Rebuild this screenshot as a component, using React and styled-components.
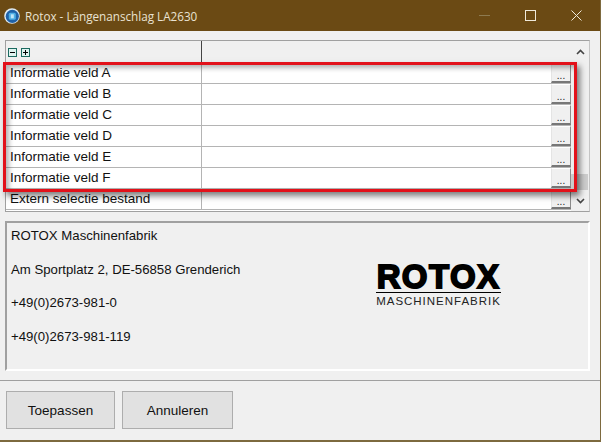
import React from "react";
import styled, { createGlobalStyle } from "styled-components";

const GlobalStyle = createGlobalStyle`
  html, body {
    margin: 0;
    padding: 0;
    background: #f0f0f0;
  }
`;

const Window = styled.div`
  position: relative;
  width: 601px;
  height: 442px;
  box-sizing: border-box;
  display: flex;
  flex-direction: column;
  background: #f0f0f0;
  border-right: 1px solid #7d6a3f;
  border-bottom: 2px solid #7d6a3f;
  font-family: "Liberation Sans", Arial, sans-serif;
  overflow: hidden;
`;

const TitleBar = styled.div`
  height: 31px;
  flex: none;
  display: flex;
  align-items: center;
  background: #6b4a14;
  color: #e9e2d2;
  font-family: "Open Sans", sans-serif;
  font-size: 11.7px;
  padding: 0 1px 0 4px;
`;

const TitleText = styled.span`
  margin-left: 5px;
  flex: 1;
`;

const WinButton = styled.div`
  width: 46px;
  height: 31px;
  display: flex;
  align-items: center;
  justify-content: center;
`;

const Content = styled.div`
  flex: 1;
  display: flex;
  flex-direction: column;
  padding: 9px 10px 0 5px;
`;

const Grid = styled.div`
  height: 172px;
  box-sizing: border-box;
  flex: none;
  display: flex;
  border: 1px solid #a0a0a0;
  border-right-color: #c4c4c4;
  background: #fff;
`;

const GridBody = styled.div`
  flex: 1;
  display: flex;
  flex-direction: column;
`;

const HeaderRow = styled.div`
  height: 22px;
  flex: none;
  display: flex;
  background: #f0f0f0;
`;

const HeaderLabel = styled.div`
  width: 196px;
  box-sizing: border-box;
  border-right: 1px solid #444;
  display: flex;
  align-items: center;
  gap: 4px;
  padding: 0 0 0 2px;
`;

const Toggle = styled.span`
  width: 9px;
  height: 9px;
  box-sizing: border-box;
  border: 1px solid #1c6a60;
  background: #dff3f0;
  display: flex;
  align-items: center;
  justify-content: center;
`;

const Row = styled.div`
  height: 21px;
  flex: none;
  box-sizing: border-box;
  display: flex;
  background: #fff;
  border-bottom: 1px solid #b4b4b4;
`;

const RowLabel = styled.div`
  width: 196px;
  box-sizing: border-box;
  border-right: 1px solid #b4b4b4;
  padding-left: 4px;
  font-size: 13.5px;
  line-height: 19px;
  color: #111;
  white-space: nowrap;
`;

const RowValue = styled.div`
  flex: 1;
  display: flex;
  justify-content: flex-end;
`;

const DotsButton = styled.div`
  width: 20px;
  height: 20px;
  box-sizing: border-box;
  background: #f0f0f0;
  border-left: 1px solid #e4e4e4;
  border-top: 1px solid #fff;
  border-right: 1px solid #8c8c8c;
  border-bottom: 2px solid #777;
  display: flex;
  align-items: flex-end;
  justify-content: center;
  font-size: 10px;
  line-height: 11px;
  color: #222;
`;

const Scrollbar = styled.div`
  width: 18px;
  flex: none;
  display: flex;
  flex-direction: column;
  background: #f0f0f0;
`;

const ScrollArrow = styled.div`
  height: 21px;
  flex: none;
  display: flex;
  align-items: center;
  justify-content: center;
`;

const ScrollTrack = styled.div`
  flex: 1;
  display: flex;
  flex-direction: column;
  justify-content: flex-end;
`;

const ScrollThumb = styled.div`
  height: 16px;
  margin-right: 1px;
  background: #cdcdcd;
`;

const InfoPanel = styled.div`
  margin-top: 9px;
  height: 150px;
  flex: none;
  box-sizing: border-box;
  display: flex;
  border-top: 2px solid #a0a0a0;
  border-left: 2px solid #a0a0a0;
  border-right: 2px solid #fff;
  border-bottom: 2px solid #fff;
`;

const Address = styled.div`
  flex: 1;
  padding: 4px 0 0 4px;
  display: flex;
  flex-direction: column;
  gap: 16.5px;
`;

const AddressLine = styled.div`
  font-size: 13.2px;
  line-height: 17px;
  color: #111;
`;

const Logo = styled.div`
  width: 125px;
  margin: 41px 87px 0 0;
  display: flex;
  flex-direction: column;
  align-items: center;
  color: #000;
`;

const LogoMark = styled.div`
  font-size: 33px;
  line-height: 26px;
  font-weight: 700;
  letter-spacing: 1.4px;
  -webkit-text-stroke: 1.8px #000;
  width: 125px;
  text-align: center;
  white-space: nowrap;
  border-bottom: 1px solid #000;
  padding-bottom: 2px;
`;

const LogoSub = styled.div`
  margin-top: 2px;
  font-size: 11.5px;
  line-height: 12px;
  letter-spacing: 0.98px;
  white-space: nowrap;
  color: #222;
`;

const Footer = styled.div`
  margin: 9px -10px 0 -5px;
  flex: 1;
  display: flex;
  align-items: flex-start;
  gap: 7px;
  padding: 10px 0 0 6px;
  border-top: 1px solid #a0a0a0;
`;

const Button = styled.div`
  width: ${(p) => p.$width}px;
  height: 38px;
  box-sizing: border-box;
  border: 1px solid #adadad;
  background: #e1e1e1;
  display: flex;
  align-items: center;
  justify-content: center;
  font-size: 13.5px;
  color: #111;
`;

const Highlight = styled.div`
  position: absolute;
  left: 3px;
  top: 62px;
  width: 574px;
  height: 130px;
  box-sizing: border-box;
  border: 3px solid #e2111a;
  box-shadow: 3px 4px 6px rgba(0, 0, 0, 0.5), inset 3px 3px 5px rgba(0, 0, 0, 0.3);
  pointer-events: none;
`;

const rows = [
  "Informatie veld A",
  "Informatie veld B",
  "Informatie veld C",
  "Informatie veld D",
  "Informatie veld E",
  "Informatie veld F",
  "Extern selectie bestand",
];

const address = [
  "ROTOX Maschinenfabrik",
  "Am Sportplatz 2, DE-56858 Grenderich",
  "+49(0)2673-981-0",
  "+49(0)2673-981-119",
];

const AppIcon = () => (
  <svg width="16" height="16" viewBox="0 0 16 16">
    <circle cx="8" cy="8" r="7.8" fill="#dfeaf2" />
    <circle cx="8.3" cy="8.3" r="6.6" fill="#1f62a8" />
    <rect x="4.8" y="4.8" width="7" height="7" rx="1.5" fill="#4fb0e6" />
    <rect x="6.8" y="6.3" width="3" height="4" fill="#bfe6f8" />
  </svg>
);

const App = () => (
  <>
    <GlobalStyle />
    <Window>
      <TitleBar>
        <AppIcon />
        <TitleText>Rotox - Längenanschlag LA2630</TitleText>
        <WinButton>
          <svg width="11" height="11" viewBox="0 0 11 11">
            <path d="M0 5.5H11" stroke="#8d7a50" strokeWidth="1" />
          </svg>
        </WinButton>
        <WinButton>
          <svg width="11" height="11" viewBox="0 0 11 11">
            <rect x="0.5" y="0.5" width="10" height="10" fill="none" stroke="#efe9da" />
          </svg>
        </WinButton>
        <WinButton>
          <svg width="11" height="11" viewBox="0 0 11 11">
            <path d="M0.5 0.5L10.5 10.5M10.5 0.5L0.5 10.5" stroke="#efe9da" />
          </svg>
        </WinButton>
      </TitleBar>
      <Content>
        <Grid>
          <GridBody>
            <HeaderRow>
              <HeaderLabel>
                <Toggle>
                  <svg width="7" height="7" viewBox="0 0 7 7">
                    <path d="M1 3.5H6" stroke="#000" />
                  </svg>
                </Toggle>
                <Toggle>
                  <svg width="7" height="7" viewBox="0 0 7 7">
                    <path d="M1 3.5H6M3.5 1V6" stroke="#000" />
                  </svg>
                </Toggle>
              </HeaderLabel>
            </HeaderRow>
            {rows.map((label) => (
              <Row key={label}>
                <RowLabel>{label}</RowLabel>
                <RowValue>
                  <DotsButton>...</DotsButton>
                </RowValue>
              </Row>
            ))}
          </GridBody>
          <Scrollbar>
            <ScrollArrow>
              <svg width="9" height="6" viewBox="0 0 9 6">
                <path d="M1 5L4.5 1.5L8 5" fill="none" stroke="#444" strokeWidth="1.6" />
              </svg>
            </ScrollArrow>
            <ScrollTrack>
              <ScrollThumb />
            </ScrollTrack>
            <ScrollArrow>
              <svg width="9" height="6" viewBox="0 0 9 6">
                <path d="M1 1L4.5 4.5L8 1" fill="none" stroke="#444" strokeWidth="1.6" />
              </svg>
            </ScrollArrow>
          </Scrollbar>
        </Grid>
        <InfoPanel>
          <Address>
            {address.map((line) => (
              <AddressLine key={line}>{line}</AddressLine>
            ))}
          </Address>
          <Logo>
            <LogoMark>ROTOX</LogoMark>
            <LogoSub>MASCHINENFABRIK</LogoSub>
          </Logo>
        </InfoPanel>
        <Footer>
          <Button $width={109}>Toepassen</Button>
          <Button $width={111}>Annuleren</Button>
        </Footer>
      </Content>
      <Highlight />
    </Window>
  </>
);

export default App;
